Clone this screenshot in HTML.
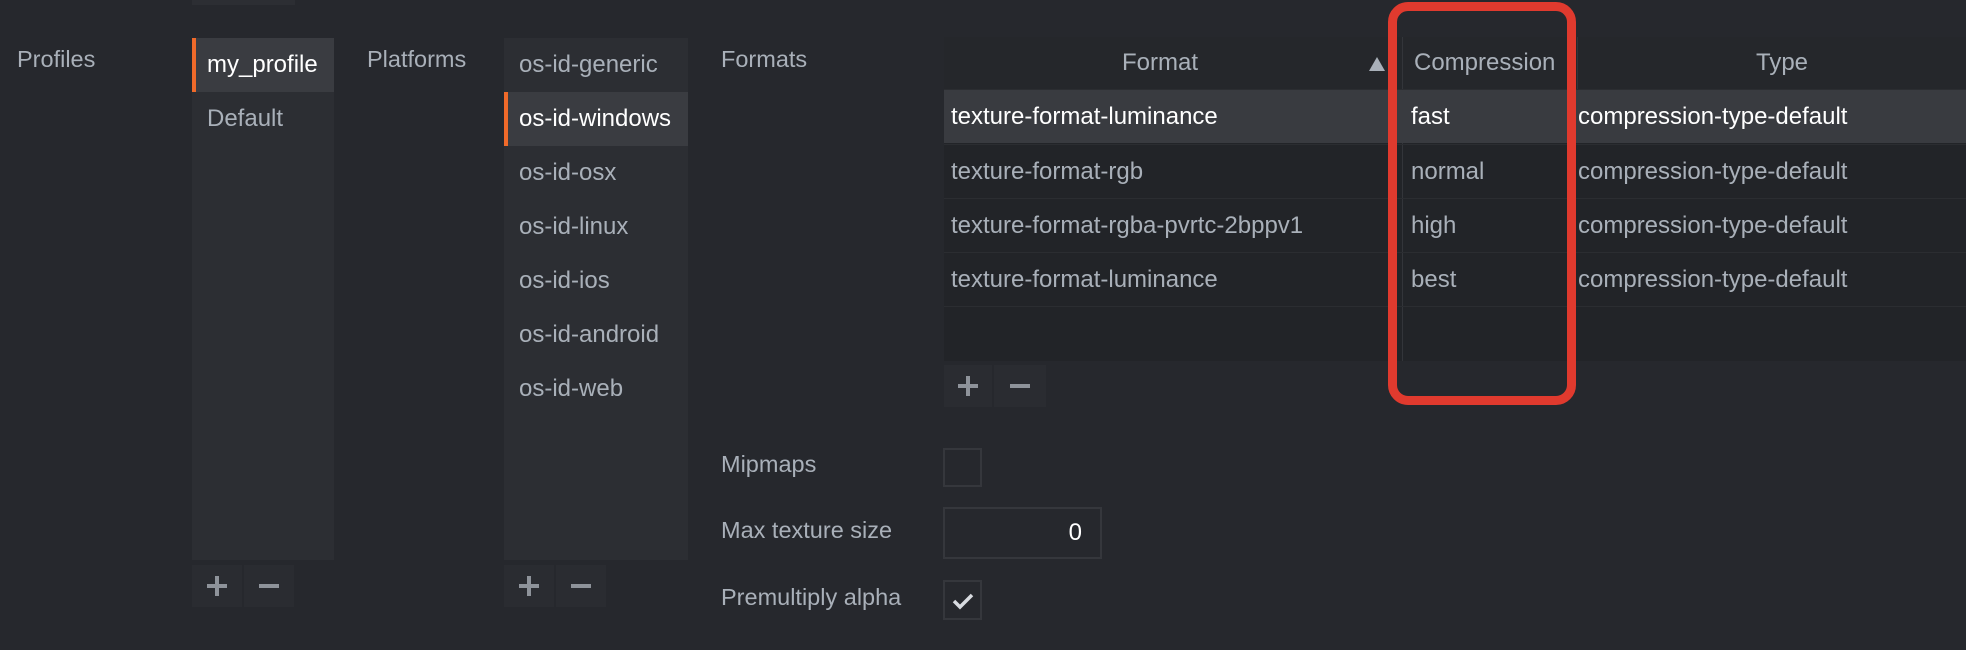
<!DOCTYPE html>
<html><head><meta charset="utf-8"><style>
*{margin:0;padding:0;box-sizing:border-box}
body{width:1966px;height:650px;overflow:hidden;background:#26282d;font-family:"Liberation Sans",sans-serif;font-size:24px;color:#a9b0b9;position:relative}
.a{position:absolute}
.lbl{position:absolute;line-height:30px;font-size:23.5px}
.list{position:absolute;background:#2c2e33}
.row{height:54px;line-height:54px;padding-left:15px;white-space:nowrap}
.sel{background:#3a3c41;color:#fff;border-left:4px solid #f06a2a;padding-left:11px}
.btn{position:absolute;background:#2a2c31;width:50px;height:42px;color:#8e939a;text-align:center}
.btn svg{margin-top:9px}
.tbl{position:absolute;left:944px;top:37px;width:1022px;height:324px;background:#222428}
.hdr{position:absolute;left:0;top:0;width:1022px;height:52px;background:#25272b}
.tr{position:absolute;left:0;width:1022px;height:54px;line-height:54px;border-top:1px solid #2b2d31;white-space:nowrap}
.tr span{position:absolute}
.cb{position:absolute;border:2px solid #35373c;background:#26282d}
</style></head><body>
<div class="a" style="left:192px;top:0;width:103px;height:5px;background:#2c2e33"></div>

<div class="lbl" style="left:17px;top:44px">Profiles</div>
<div class="list" style="left:192px;top:38px;width:142px;height:522px">
<div class="row sel">my_profile</div><div class="row">Default</div></div>
<div class="btn" style="left:192px;top:565px"><svg width="24" height="24"><path d="M12 2v20M2 12h20" stroke="#8e939a" stroke-width="4"/></svg></div>
<div class="btn" style="left:244px;top:565px"><svg width="24" height="24"><path d="M2 12h20" stroke="#8e939a" stroke-width="4"/></svg></div>

<div class="lbl" style="left:367px;top:44px">Platforms</div>
<div class="list" style="left:504px;top:38px;width:184px;height:522px">
<div class="row">os-id-generic</div><div class="row sel">os-id-windows</div><div class="row">os-id-osx</div><div class="row">os-id-linux</div><div class="row">os-id-ios</div><div class="row">os-id-android</div><div class="row">os-id-web</div></div>
<div class="btn" style="left:504px;top:565px"><svg width="24" height="24"><path d="M12 2v20M2 12h20" stroke="#8e939a" stroke-width="4"/></svg></div>
<div class="btn" style="left:556px;top:565px"><svg width="24" height="24"><path d="M2 12h20" stroke="#8e939a" stroke-width="4"/></svg></div>

<div class="lbl" style="left:721px;top:44px">Formats</div>
<div class="tbl">
<div class="hdr">
<span class="a" style="left:178px;top:12px">Format</span>
<svg class="a" style="left:425px;top:20px" width="16" height="14"><path d="M8 0L16 14H0z" fill="#a9b0b9"/></svg>
<span class="a" style="left:470px;top:12px">Compression</span>
<span class="a" style="left:812px;top:12px">Type</span>
</div>
<div class="a" style="left:458px;top:0;width:1px;height:324px;background:#33353a"></div>
<div class="a" style="left:633px;top:0;width:1px;height:52px;background:#33353a"></div>
<div class="tr" style="top:52px;background:#393b40;color:#fff"><span style="left:7px">texture-format-luminance</span><span style="left:467px">fast</span><span style="left:634px">compression-type-default</span></div>
<div class="tr" style="top:107px"><span style="left:7px">texture-format-rgb</span><span style="left:467px">normal</span><span style="left:634px">compression-type-default</span></div>
<div class="tr" style="top:161px"><span style="left:7px">texture-format-rgba-pvrtc-2bppv1</span><span style="left:467px">high</span><span style="left:634px">compression-type-default</span></div>
<div class="tr" style="top:215px"><span style="left:7px">texture-format-luminance</span><span style="left:467px">best</span><span style="left:634px">compression-type-default</span></div>
<div class="tr" style="top:269px"></div>
</div>
<div class="btn" style="left:944px;top:365px;width:48px"><svg width="24" height="24"><path d="M12 2v20M2 12h20" stroke="#8e939a" stroke-width="4"/></svg></div>
<div class="btn" style="left:994px;top:365px;width:52px"><svg width="24" height="24"><path d="M2 12h20" stroke="#8e939a" stroke-width="4"/></svg></div>

<div class="a" style="left:1388px;top:2px;width:188px;height:403px;border:9px solid #e03a2e;border-radius:20px"></div>

<div class="lbl" style="left:721px;top:449px">Mipmaps</div>
<div class="cb" style="left:943px;top:448px;width:39px;height:39px"></div>
<div class="lbl" style="left:721px;top:515px">Max texture size</div>
<div class="cb" style="left:943px;top:507px;width:159px;height:52px;text-align:right;padding-right:18px;line-height:48px;color:#fff">0</div>
<div class="lbl" style="left:721px;top:582px">Premultiply alpha</div>
<div class="cb" style="left:943px;top:580px;width:39px;height:40px"><svg width="35" height="36"><path d="M9 19l6 6 12-12" fill="none" stroke="#d8dbe0" stroke-width="3.5"/></svg></div>
</body></html>
